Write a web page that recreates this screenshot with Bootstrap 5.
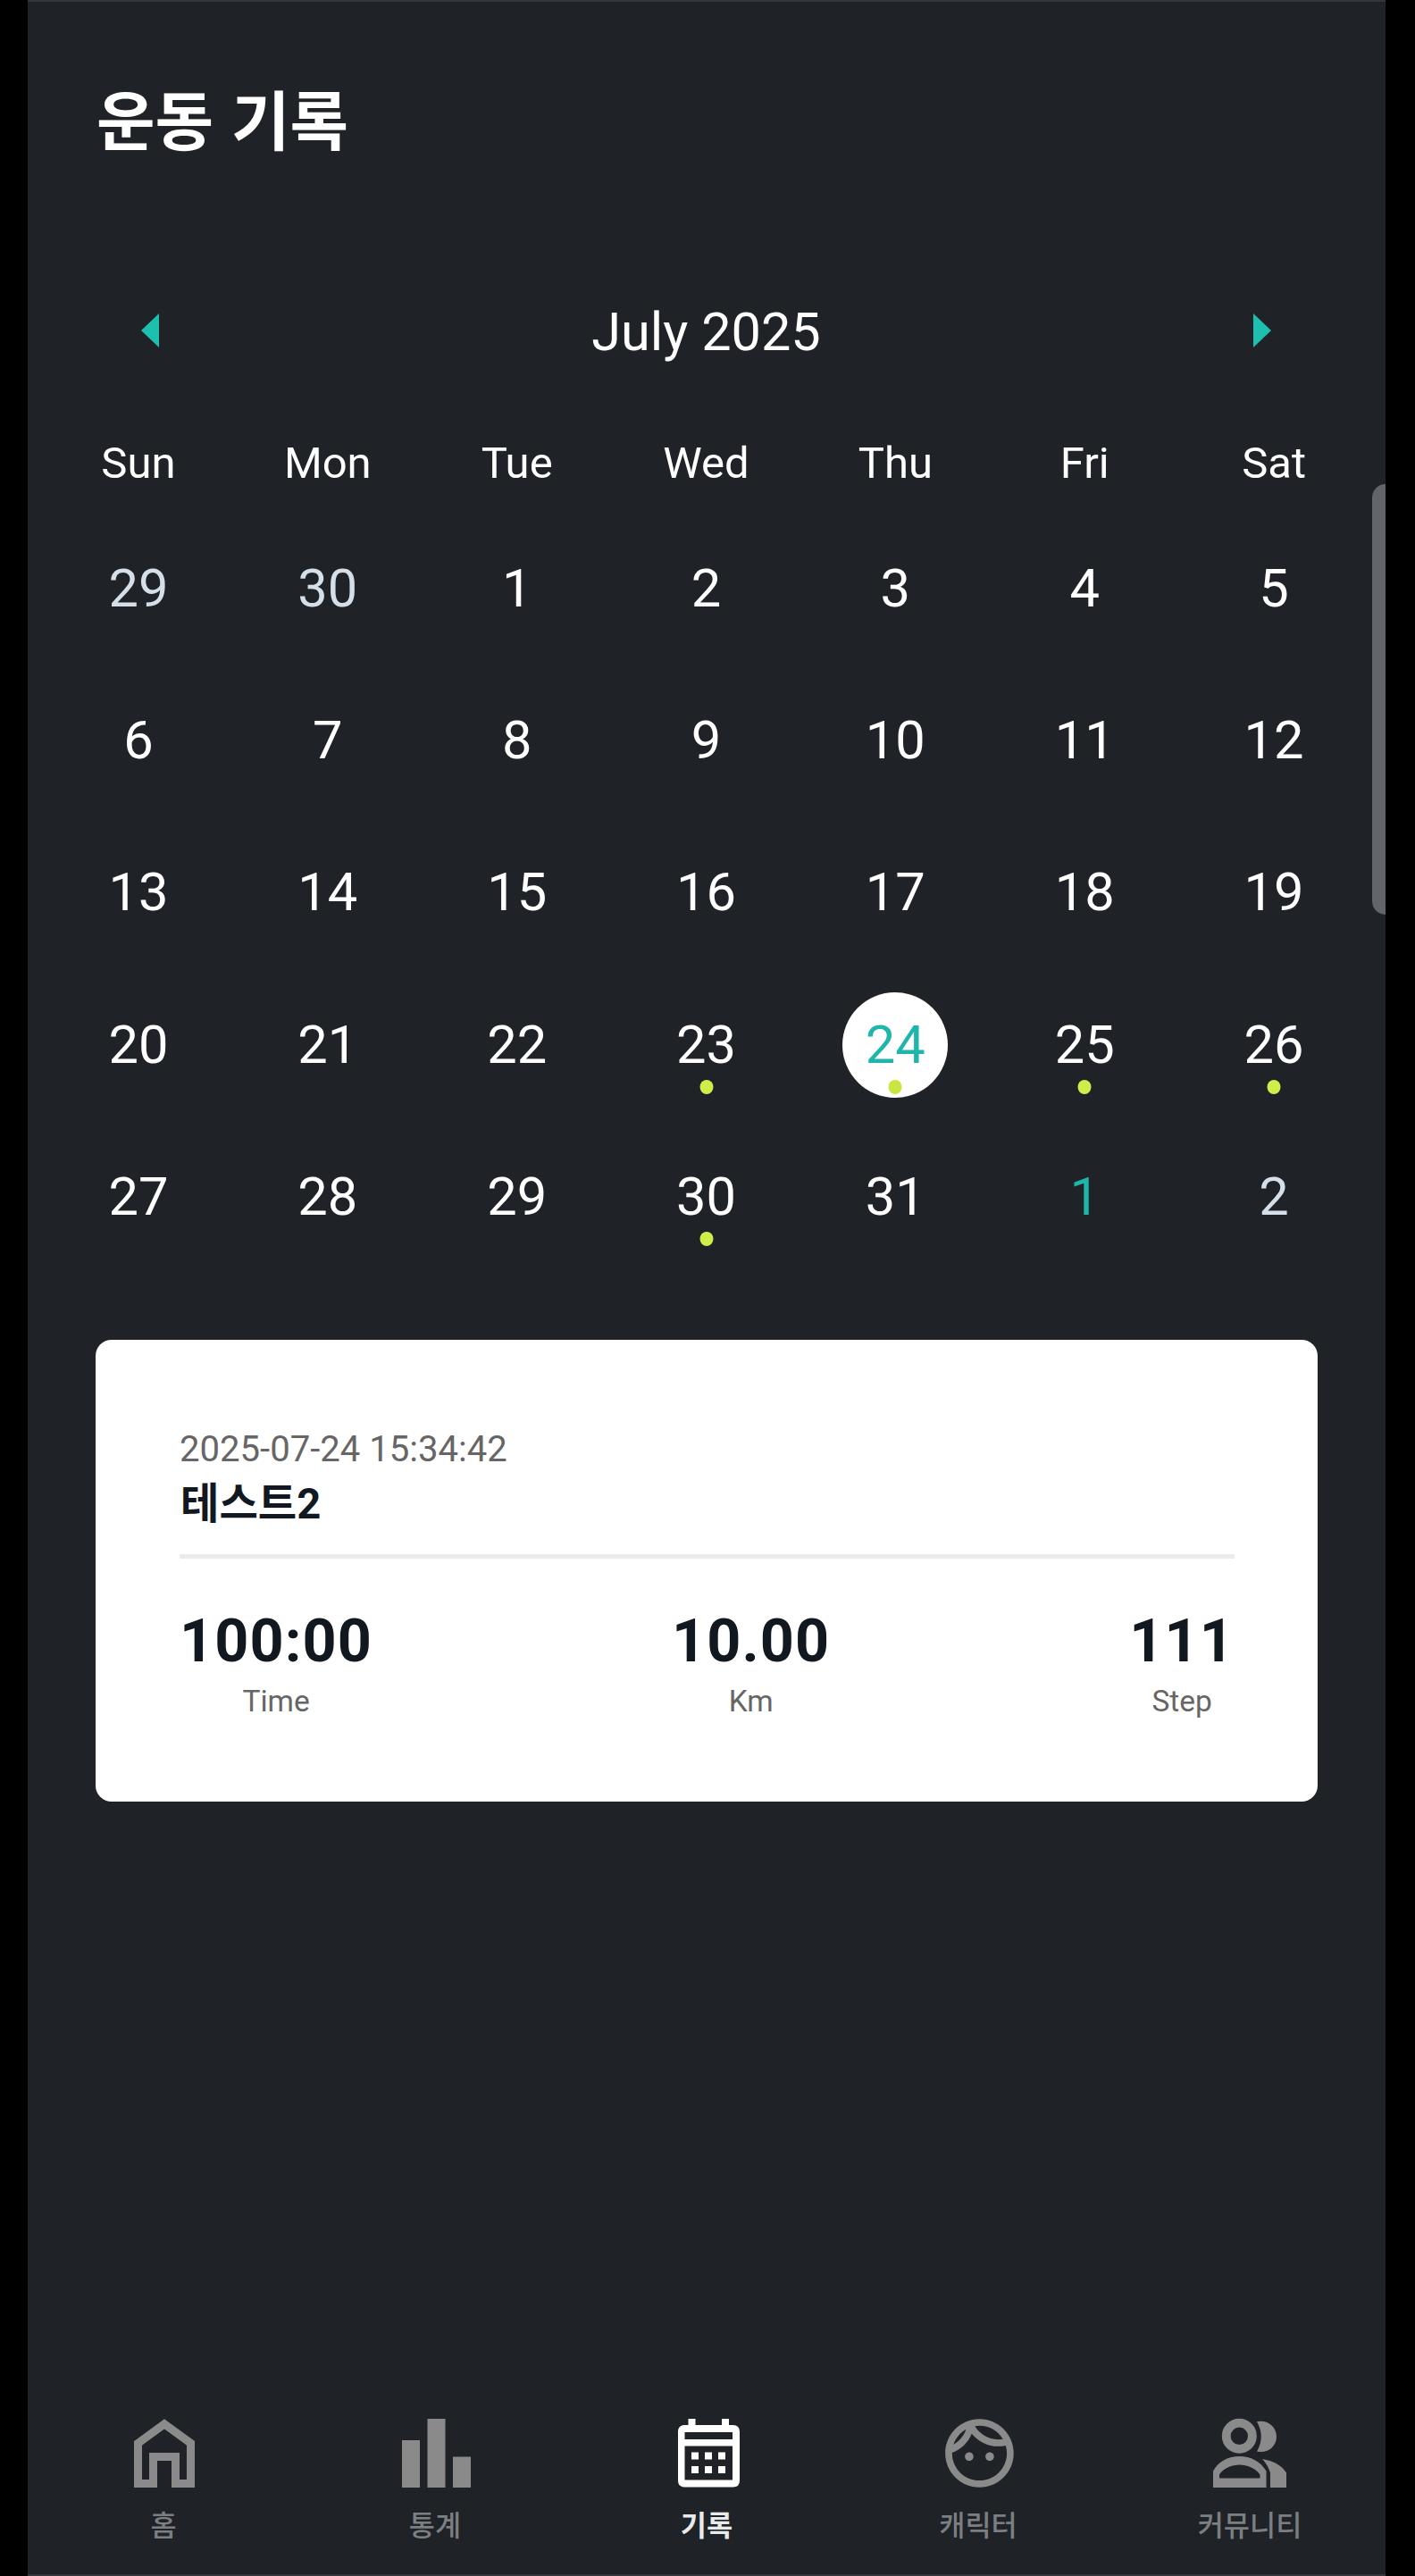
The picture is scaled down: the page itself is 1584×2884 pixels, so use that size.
<!DOCTYPE html>
<html lang="ko">
<head>
<meta charset="utf-8">
<meta name="viewport" content="width=device-width, initial-scale=1">
<title>운동 기록</title>
<link href="https://cdn.jsdelivr.net/npm/bootstrap@5.3.0/dist/css/bootstrap.min.css" rel="stylesheet">
<style>
  body { background: #000; font-family: Roboto, "Noto Sans CJK KR", sans-serif; color: #fff; }
  .phone { width: 1520px; height: 2884px; margin-left: 31px; background: #1f2227; border-top: 2px solid #33373c; border-bottom: 2px solid #33373c; }
  .page-title { font: 700 71.2px/100px "Noto Sans CJK KR", sans-serif; margin: 79px 0 0 77px; }
  .cal { margin: 141px 19px 0 18px; }
  .cal-head { height: 100px; padding: 0 109px; }
  .cal-month { font-size: 59.4px; line-height: 100px; }
  .arrow { width: 20px; height: 38px; fill: #1fbfb0; margin-bottom: 5px; }
  .week-days { margin-top: 57px; height: 80px; margin-bottom: 15px; font-size: 49px; line-height: 80px; }
  .week-row { height: 170.2px; font-size: 59.6px; }
  .day-num { width: 118px; height: 118px; line-height: 118px; }
  .day-num.off { color: #d5dfe9; }
  .day-num.today { color: #1fb5aa; }
  .day-num.picked { background: #fff; color: #1fb5aa; }
  .dot-mark { width: 15px; height: 16px; background: #cfee4a; bottom: 4px; }
  .picked .dot-mark { background: #c8e63f; }
  .record { width: 1368px; height: 517px; margin: 75px 0 0 76px; border-radius: 18px; padding: 92px 93px 0 94px; color: #12181f; }
  .stamp { font-size: 40.1px; line-height: 62px; color: #666; }
  .record-name { font-size: 47.2px; line-height: 60px; padding-left: 1px; }
  .rule { height: 5px; background: #ebebeb; margin-top: 26px; }
  .stats { margin-top: 54px; }
  .stat-value { font-size: 66.5px; line-height: 76px; letter-spacing: 1.1px; }
  .stat-label { font-size: 33.5px; line-height: 56px; margin-top: 2px; color: #666; }
  .tabs { padding-bottom: 30px; }
  .tab-item { width: 304px; font: 500 31.7px/54px "Noto Sans CJK KR", sans-serif; color: #7c7f82; }
  .tab-item svg { width: 90px; height: 90px; margin-bottom: 6px; fill: #8a8a8a; }
  .tab-item.on { color: #e8eaec; font-weight: 700; }
  .tab-item.on svg { fill: #fff; }
  .scroller { right: 33px; top: 542px; width: 15px; height: 482px; background: #626569; border-radius: 15px 0 0 15px; }
</style>
</head>
<body>
<div class="phone d-flex flex-column">
  <h1 class="page-title">운동 기록</h1>

  <section class="cal text-center">
    <div class="cal-head d-flex justify-content-between align-items-center">
      <svg class="arrow" viewBox="0 0 20 38"><path d="M20 0V38L0 19Z"/></svg>
      <div class="cal-month">July 2025</div>
      <svg class="arrow" viewBox="0 0 20 38"><path d="M0 0V38L20 19Z"/></svg>
    </div>
    <div class="week-days row g-0">
      <div class="col">Sun</div><div class="col">Mon</div><div class="col">Tue</div><div class="col">Wed</div><div class="col">Thu</div><div class="col">Fri</div><div class="col">Sat</div>
    </div>
    <div id="weeks"></div>
  </section>

  <article class="record bg-white">
    <div class="stamp">2025-07-24 15:34:42</div>
    <div class="record-name fw-bold">테스트2</div>
    <div class="rule"></div>
    <div class="stats d-flex justify-content-between text-center">
      <div><div class="stat-value fw-bold">100:00</div><div class="stat-label">Time</div></div>
      <div><div class="stat-value fw-bold">10.00</div><div class="stat-label">Km</div></div>
      <div><div class="stat-value fw-bold">111</div><div class="stat-label">Step</div></div>
    </div>
  </article>

  <nav class="tabs d-flex mt-auto text-center">
    <div class="tab-item d-flex flex-column align-items-center">
      <svg viewBox="0 0 90 90"><path d="M16.5 33.3L46 11.8L75.5 33.3V78.5H58.5V48.5H33.5V78.5H16.5Z" style="fill:none;stroke:#8a8a8a;stroke-width:9"/></svg>
      <span>홈</span>
    </div>
    <div class="tab-item d-flex flex-column align-items-center">
      <svg viewBox="0 0 90 90"><path d="M8 30H28V83H8ZM36.5 6H56.5V83H36.5ZM65 48.500H85V83H65Z"/></svg>
      <span>통계</span>
    </div>
    <div class="tab-item on d-flex flex-column align-items-center">
      <svg viewBox="0 0 90 90"><path fill-rule="evenodd" d="M24.500 6H32.500V13H62V6H70V13H74.500Q82 13 82 20.500V75Q82 82.500 74.500 82.500H20.500Q13 82.500 13 75V20.500Q13 13 20.500 13H24.500ZM20.500 21V29H74V21ZM20.500 36.500V74.500H74V36.500Z"/><path d="M28 43.500h8v8h-8zM43 43.500h8v8h-8zM58 43.500h8v8h-8zM28 59h8v8h-8zM43 59h8v8h-8zM58 59h8v8h-8z"/></svg>
      <span>기록</span>
    </div>
    <div class="tab-item d-flex flex-column align-items-center">
      <svg viewBox="0 0 90 90"><path transform="translate(.5 -1.5) scale(3.83)" d="M10.250 13c0 .69-.56 1.250-1.250 1.250S7.750 13.690 7.750 13s.56-1.250 1.250-1.250 1.250.56 1.250 1.250zM15 11.750c-.69 0-1.250.56-1.250 1.250s.56 1.250 1.250 1.250 1.250-.56 1.250-1.250-.56-1.250-1.250-1.250zm7 .25c0 5.520-4.480 10-10 10S2 17.520 2 12 6.480 2 12 2s10 4.480 10 10zM10.660 4.120C12.060 6.440 14.600 8 17.500 8c.46 0 .91-.05 1.340-.12C17.440 5.560 14.900 4 12 4c-.46 0-.91.05-1.340.12zM4.420 9.470c1.710-.97 3.030-2.550 3.660-4.440C6.370 6 5.050 7.580 4.420 9.470zM20 12c0-.78-.12-1.530-.33-2.240-.7.15-1.420.24-2.170.24-3.130 0-5.920-1.440-7.760-3.690C8.690 8.870 6.600 10.880 4 11.860c.01.04 0 .09 0 .14 0 4.420 3.580 8 8 8s8-3.580 8-8z"/></svg>
      <span>캐릭터</span>
    </div>
    <div class="tab-item d-flex flex-column align-items-center">
      <svg viewBox="0 0 90 90"><circle cx="33.300" cy="25.300" r="14.600" style="fill:none;stroke:#8a8a8a;stroke-width:9.800"/><path d="M53 9.200C65 6.500 75 15 75 26S65 45.300 53 42.600Q62.500 26 53 9.200Z"/><path fill-rule="evenodd" d="M4 83V64.500C10 53.500 21 48 33.500 48S57 53.500 63.500 64.500V83ZM11 72.500H56.500V68.500C51 61 42 57.500 33.500 57.500S16 61 11 68.500Z"/><path d="M59 51C71 53 81 58 86 66.500V83H68V66.500Q65 57 59 51Z"/></svg>
      <span>커뮤니티</span>
    </div>
  </nav>
</div>
<div class="scroller position-absolute"></div>

<script src="https://cdn.jsdelivr.net/npm/bootstrap@5.3.0/dist/js/bootstrap.bundle.min.js"></script>
<script>
  // Five weeks starting on Sunday, June 29
  const first = new Date(2025, 5, 29);
  const marked = ['6-23', '6-24', '6-25', '6-26', '6-30'];
  let html = '';
  for (let w = 0; w < 5; w++) {
    html += '<div class="week-row row g-0 align-items-center">';
    for (let d = 0; d < 7; d++) {
      const day = new Date(2025, 5, first.getDate() + w * 7 + d);
      const key = day.getMonth() + '-' + day.getDate();
      const state = key === '6-24' ? ' picked' : key === '7-1' ? ' today' : day.getMonth() !== 6 ? ' off' : '';
      const dot = marked.includes(key) ? '<span class="dot-mark rounded-circle position-absolute start-50 translate-middle-x"></span>' : '';
      html += `<div class="col"><div class="day-num position-relative rounded-circle mx-auto${state}">${day.getDate()}${dot}</div></div>`;
    }
    html += '</div>';
  }
  document.getElementById('weeks').innerHTML = html;
</script>
</body>
</html>
